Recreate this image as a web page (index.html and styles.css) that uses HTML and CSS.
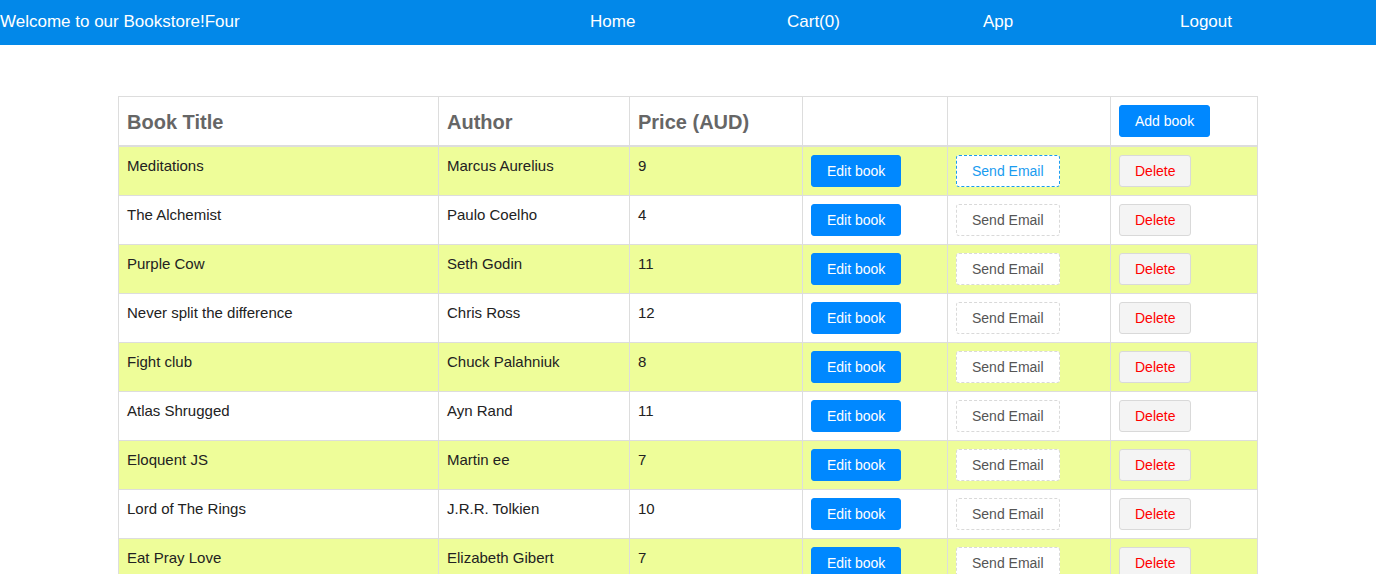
FILE: index.html
```html
<!DOCTYPE html>
<html>
<head>
<meta charset="utf-8">
<link rel="stylesheet" href="styles.css">
</head>
<body>
<nav class="navbar">
  <div class="brand">Welcome to our Bookstore!Four</div>
  <ul class="nav-links">
    <li class="home">Home</li>
    <li class="cart">Cart(0)</li>
    <li class="app">App</li>
    <li class="logout">Logout</li>
  </ul>
</nav>
<main class="container">
  <table class="books">
    <colgroup>
      <col class="c1"><col class="c2"><col class="c3"><col class="c4"><col class="c5"><col class="c6">
    </colgroup>
    <thead>
      <tr>
        <th><span class="th-label">Book Title</span></th>
        <th><span class="th-label">Author</span></th>
        <th><span class="th-label">Price (AUD)</span></th>
        <th></th>
        <th></th>
        <th><button class="btn btn-primary">Add book</button></th>
      </tr>
    </thead>
    <tbody>
      <tr class="odd"><td>Meditations</td><td>Marcus Aurelius</td><td>9</td><td><button class="btn btn-primary">Edit book</button></td><td><button class="btn btn-dashed focused">Send Email</button></td><td><button class="btn btn-danger">Delete</button></td></tr>
      <tr><td>The Alchemist</td><td>Paulo Coelho</td><td>4</td><td><button class="btn btn-primary">Edit book</button></td><td><button class="btn btn-dashed">Send Email</button></td><td><button class="btn btn-danger">Delete</button></td></tr>
      <tr class="odd"><td>Purple Cow</td><td>Seth Godin</td><td>11</td><td><button class="btn btn-primary">Edit book</button></td><td><button class="btn btn-dashed">Send Email</button></td><td><button class="btn btn-danger">Delete</button></td></tr>
      <tr><td>Never split the difference</td><td>Chris Ross</td><td>12</td><td><button class="btn btn-primary">Edit book</button></td><td><button class="btn btn-dashed">Send Email</button></td><td><button class="btn btn-danger">Delete</button></td></tr>
      <tr class="odd"><td>Fight club</td><td>Chuck Palahniuk</td><td>8</td><td><button class="btn btn-primary">Edit book</button></td><td><button class="btn btn-dashed">Send Email</button></td><td><button class="btn btn-danger">Delete</button></td></tr>
      <tr><td>Atlas Shrugged</td><td>Ayn Rand</td><td>11</td><td><button class="btn btn-primary">Edit book</button></td><td><button class="btn btn-dashed">Send Email</button></td><td><button class="btn btn-danger">Delete</button></td></tr>
      <tr class="odd"><td>Eloquent JS</td><td>Martin ee</td><td>7</td><td><button class="btn btn-primary">Edit book</button></td><td><button class="btn btn-dashed">Send Email</button></td><td><button class="btn btn-danger">Delete</button></td></tr>
      <tr><td>Lord of The Rings</td><td>J.R.R. Tolkien</td><td>10</td><td><button class="btn btn-primary">Edit book</button></td><td><button class="btn btn-dashed">Send Email</button></td><td><button class="btn btn-danger">Delete</button></td></tr>
      <tr class="odd"><td>Eat Pray Love</td><td>Elizabeth Gibert</td><td>7</td><td><button class="btn btn-primary">Edit book</button></td><td><button class="btn btn-dashed">Send Email</button></td><td><button class="btn btn-danger">Delete</button></td></tr>
    </tbody>
  </table>
</main>
</body>
</html>
```

FILE: styles.css
```css
html, body {
  margin: 0;
  padding: 0;
  background: #fff;
  font-family: "Liberation Sans", Arial, Helvetica, sans-serif;
  color: #222;
}

.navbar {
  height: 45px;
  background: #0288e9;
  color: #fff;
  display: flex;
  align-items: center;
  font-size: 17px;
}

.brand {
  width: 590px;
  white-space: nowrap;
  padding-bottom: 2px;
}

.nav-links {
  list-style: none;
  margin: 0;
  padding: 0 0 2px 0;
  display: flex;
}

.nav-links li {
  white-space: nowrap;
}

.nav-links .home { width: 197px; }
.nav-links .cart { width: 196px; }
.nav-links .app { width: 197px; }

.container {
  width: 1139px;
  margin: 51px 0 0 118px;
}

.books {
  width: 1139px;
  border-collapse: collapse;
  table-layout: fixed;
}

.c1 { width: 320px; }
.c2 { width: 191px; }
.c3 { width: 173px; }
.c4 { width: 145px; }
.c5 { width: 163px; }
.c6 { width: 147px; }

.books th,
.books td {
  border: 1px solid #ddd;
  padding: 8px;
  text-align: left;
  vertical-align: top;
}

.books th {
  font-size: 20px;
  font-weight: bold;
  color: #666;
  height: 32px;
  vertical-align: middle;
  border-bottom: 2px solid #ddd;
  padding-top: 8px;
  padding-bottom: 8px;
}

.th-label {
  display: inline-block;
  padding-top: 2px;
}

.books td {
  font-size: 15px;
  color: #222;
  line-height: 22px;
  height: 32px;
  padding-top: 8px;
  padding-bottom: 8px;
}

.books tr.odd td {
  background: #eefd99;
}

.btn {
  font-family: "Liberation Sans", Arial, Helvetica, sans-serif;
  font-size: 14px;
  height: 32px;
  padding: 0 15px;
  border-radius: 3px;
  border: 1px solid transparent;
  cursor: pointer;
  display: inline-block;
  vertical-align: top;
  line-height: 30px;
}

.btn-primary {
  background: #0088ff;
  border-color: #0088ff;
  color: #fff;
}

.btn-dashed {
  background: #fff;
  border: 1px dashed #d9d9d9;
  color: #555;
}

.btn-dashed.focused {
  border-color: #1a9cf0;
  color: #1a9cf0;
}

.btn-danger {
  background: #f4f4f4;
  border: 1px solid #d9d9d9;
  color: #f00;
}
```
